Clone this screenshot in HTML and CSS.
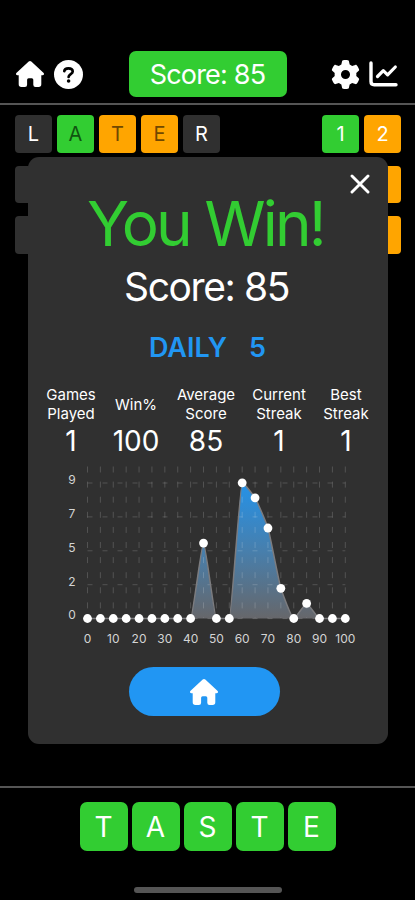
FILE: index.html
```html
<!DOCTYPE html>
<html lang="en">
<head>
    <meta charset="UTF-8">
    <title>Daily 5</title>
    <link rel="stylesheet" href="styles.css">
</head>
<body>
    <svg class="defs" width="0" height="0">
        <symbol id="house" viewBox="0 0 28 26">
            <path d="M12.7.6Q14-.5 15.3.6L27.4 11.7Q28.3 12.7 27.9 13.5Q27.5 14.3 26.5 14.3H25.3V23.3Q25.3 26 22.6 26H19.5Q17.3 26 17.3 23.8V18.8Q17.3 17.3 15.8 17.3H12.6Q11.1 17.3 11.1 18.8V23.8Q11.1 26 8.9 26H5.4Q2.7 26 2.7 23.3V14.3H1.5Q.5 14.3.1 13.5Q-.3 12.7.6 11.7Z"/>
        </symbol>
    </svg>
    <div class="app">
        <header class="header">
            <div class="icons">
                <svg class="icon-home" width="28" height="26"><use href="#house"/></svg>
                <svg class="icon-help" width="29" height="29" viewBox="0 0 29 29">
                    <circle cx="14.5" cy="14.5" r="14.5" fill="#fff"/>
                    <path d="M10.3 11.2C10.5 9.2 11.8 8.3 14.4 8.3C17 8.3 18.7 9.5 18.7 11.6C18.7 14.2 14.6 14.2 14.6 17" fill="none" stroke="#000" stroke-width="2.7" stroke-linecap="round"/>
                    <circle cx="14.6" cy="21" r="1.8" fill="#000"/>
                </svg>
            </div>
            <div class="score-pill">Score: 85</div>
            <div class="icons icons-right">
                <svg width="29" height="29" viewBox="0 0 512 512">
                    <path d="M495.9 166.6c3.2 8.7 .5 18.4-6.4 24.6l-43.3 39.4c1.1 8.3 1.7 16.8 1.7 25.4s-.6 17.1-1.7 25.4l43.3 39.4c6.9 6.2 9.6 15.9 6.4 24.6c-4.4 11.9-9.7 23.3-15.8 34.3l-4.7 8.1c-6.6 11-14 21.4-22.1 31.2c-5.9 7.2-15.7 9.6-24.5 6.8l-55.7-17.7c-13.4 10.3-28.2 18.9-44 25.4l-12.5 57.1c-2 9.1-9 16.3-18.2 17.8c-13.8 2.3-28 3.5-42.5 3.5s-28.7-1.2-42.5-3.5c-9.2-1.5-16.2-8.7-18.2-17.8l-12.5-57.1c-15.8-6.5-30.6-15.1-44-25.4L83.1 425.9c-8.8 2.8-18.6 .3-24.5-6.8c-8.1-9.8-15.5-20.2-22.1-31.2l-4.7-8.1c-6.1-11-11.4-22.4-15.8-34.3c-3.2-8.7-.5-18.4 6.4-24.6l43.3-39.4C64.6 273.1 64 264.6 64 256s.6-17.1 1.7-25.4L22.4 191.2c-6.9-6.2-9.6-15.9-6.4-24.6c4.4-11.9 9.7-23.3 15.8-34.3l4.7-8.1c6.6-11 14-21.4 22.1-31.2c5.9-7.2 15.7-9.6 24.5-6.8l55.7 17.7c13.4-10.3 28.2-18.9 44-25.4l12.5-57.1c2-9.1 9-16.3 18.2-17.8C227.3 1.2 241.5 0 256 0s28.7 1.2 42.5 3.5c9.2 1.5 16.2 8.7 18.2 17.8l12.5 57.1c15.8 6.5 30.6 15.1 44 25.4l55.7-17.7c8.8-2.8 18.6-.3 24.5 6.8c8.1 9.8 15.5 20.2 22.1 31.2l4.7 8.1c6.1 11 11.4 22.4 15.8 34.3zM256 336a80 80 0 1 0 0-160 80 80 0 1 0 0 160z" fill="#fff"/>
                </svg>
                <svg width="29" height="26" viewBox="0 0 29 26" fill="none" stroke="#fff" stroke-linecap="round" stroke-linejoin="round">
                    <path d="M2 2V20.5Q2 23.7 5.2 23.7H27" stroke-width="3.4"/>
                    <path d="M8.5 15.5L14.3 9.7L18.6 13.8L26.3 6" stroke-width="3.2"/>
                </svg>
            </div>
        </header>

        <main class="board">
            <div class="row">
                <div class="tile gray">L</div>
                <div class="tile green">A</div>
                <div class="tile orange">T</div>
                <div class="tile orange">E</div>
                <div class="tile gray">R</div>
                <div class="tile green count first">1</div>
                <div class="tile orange count">2</div>
            </div>
            <div class="row">
                <div class="tile gray"></div>
                <div class="tile orange first"></div>
            </div>
            <div class="row">
                <div class="tile gray"></div>
                <div class="tile orange first"></div>
            </div>
        </main>

        <footer class="footer">
            <div class="answer">
                <div class="key">T</div>
                <div class="key">A</div>
                <div class="key">S</div>
                <div class="key">T</div>
                <div class="key">E</div>
            </div>
            <div class="home-bar"></div>
        </footer>

        <!-- Result dialog -->
        <section class="modal">
            <svg class="close" width="20" height="20" viewBox="0 0 20 20">
                <path d="M2 2L18 18M18 2L2 18" stroke="#fff" stroke-width="2.9" stroke-linecap="round"/>
            </svg>
            <h1>You Win!</h1>
            <h2>Score: 85</h2>
            <h3><span>DAILY</span><span>5</span></h3>
            <div class="stats">
                <div class="stat"><div class="label">Games<br>Played</div><div class="value">1</div></div>
                <div class="stat"><div class="label">Win%</div><div class="value">100</div></div>
                <div class="stat"><div class="label">Average<br>Score</div><div class="value">85</div></div>
                <div class="stat"><div class="label">Current<br>Streak</div><div class="value">1</div></div>
                <div class="stat"><div class="label">Best<br>Streak</div><div class="value">1</div></div>
            </div>
            <svg class="chart" id="chart" width="360" height="190" viewBox="28 460 360 190">
                <defs>
                    <linearGradient id="area" gradientUnits="userSpaceOnUse" x1="0" y1="483" x2="0" y2="618">
                        <stop offset="0" stop-color="#2592e8"/>
                        <stop offset="0.5" stop-color="#477fad"/>
                        <stop offset="1" stop-color="#66676b"/>
                    </linearGradient>
                </defs>
            </svg>
            <button class="home-button"><svg width="28" height="26"><use href="#house"/></svg></button>
        </section>
    </div>
    <script>
        var scores = [0, 0, 0, 0, 0, 0, 0, 0, 0, 5, 0, 0, 9, 8, 6, 2, 0, 1, 0, 0, 0];
        var ticks = [9, 7, 5, 2, 0];
        var chart = document.getElementById("chart");

        function px(i) { return 87.5 + i * 12.89; }
        function py(v) { return 618.5 - v * 15.08; }

        function add(name, attrs, text) {
            var el = document.createElementNS("http://www.w3.org/2000/svg", name);
            for (var key in attrs) el.setAttribute(key, attrs[key]);
            if (text !== undefined) el.textContent = text;
            chart.appendChild(el);
        }

        // Flat at peaks and valleys, so the curve never overshoots a point
        function slope(i) {
            var a = scores[i] - scores[i - 1], b = scores[i + 1] - scores[i];
            return a * b > 0 ? 2 * a * b / (a + b) : 0;
        }

        var d = "M" + px(0) + " " + py(0);
        for (var i = 1; i < scores.length; i++) {
            var m0 = slope(i - 1), m1 = slope(i);
            var t = 0.15;
            d += " C" + (px(i - 1) + 12.89 * t) + " " + py(scores[i - 1] + m0 * t) + " " +
                (px(i) - 12.89 * t) + " " + py(scores[i] - m1 * t) + " " + px(i) + " " + py(scores[i]);
        }

        add("path", { d: d + "Z", class: "area" });
        for (i = 0; i < scores.length; i++) {
            add("path", { d: "M" + px(i) + " 466.5V618", class: "grid-v" });
        }
        for (i = 0; i < ticks.length; i++) {
            var y = 483 + i * 33.9;
            add("path", { d: "M" + px(0) + " " + y + "H" + px(20), class: "grid-h" });
            add("text", { x: 72, y: y + 0.8, class: "axis" }, ticks[i]);
        }
        add("path", { d: d, class: "line" });
        for (i = 0; i < scores.length; i++) {
            add("circle", { cx: px(i), cy: py(scores[i]), r: 4.4, fill: "#fff" });
            if (i % 2 === 0) add("text", { x: px(i), y: 643, class: "axis" }, i * 5);
        }
    </script>
</body>
</html>
```
FILE: styles.css
```css
* {
    box-sizing: border-box;
}

body {
    margin: 0;
    background: #000;
    color: #fff;
    font-family: Inter, "Liberation Sans", sans-serif;
}

.defs {
    display: block;
}

#house {
    fill: #fff;
}

.app {
    position: relative;
    display: flex;
    flex-direction: column;
    width: 415px;
    height: 900px;
    overflow: hidden;
}

/* Top bar */
.header {
    display: grid;
    grid-template-columns: 113px 158px 1fr;
    align-items: center;
    height: 105px;
    padding: 51px 17px 6px 16px;
    border-bottom: 2px solid #555;
}

.icons {
    display: flex;
    align-items: center;
    gap: 10px;
}

.icons-right {
    justify-content: flex-end;
    gap: 9px;
}

.score-pill {
    height: 46px;
    padding-right: 1px;
    border-radius: 7px;
    background: #32cd32;
    font-size: 27px;
    line-height: 48px;
    letter-spacing: -0.8px;
    text-align: center;
}

/* Guesses */
.board {
    display: flex;
    flex: 1;
    flex-direction: column;
    gap: 13px;
    padding: 10px 14px 0 15px;
}

.row {
    display: flex;
    gap: 5px;
}

.tile {
    width: 37px;
    height: 37.5px;
    border-radius: 4px;
    font-size: 20px;
    line-height: 38px;
    text-align: center;
}

.gray {
    background: #303030;
}

.green {
    background: #32cd32;
    color: #105510;
}

.orange {
    background: #ffa500;
    color: #704800;
}

.count {
    color: #fff;
}

.first {
    margin-left: auto;
}

/* Answer */
.footer {
    display: flex;
    flex-direction: column;
    align-items: center;
    height: 114px;
    padding-top: 14px;
    border-top: 2px solid #555;
}

.answer {
    display: flex;
    gap: 4px;
}

.key {
    width: 48px;
    height: 49px;
    border-radius: 7px;
    background: #32cd32;
    font-size: 28px;
    line-height: 50px;
    text-align: center;
}

.home-bar {
    width: 148px;
    height: 6px;
    margin-top: 36px;
    border-radius: 3px;
    background: #555;
}

/* Result dialog */
.modal {
    position: absolute;
    top: 157px;
    left: 28px;
    display: flex;
    flex-direction: column;
    align-items: center;
    width: 360px;
    height: 587px;
    border-radius: 11px;
    background: #303030;
}

.close {
    position: absolute;
    top: 17px;
    right: 18px;
}

h1,
h2,
h3 {
    margin: 0;
    font-weight: 400;
    white-space: nowrap;
}

h1 {
    height: 70px;
    margin-top: 32px;
    padding-right: 5px;
    color: #32cd32;
    font-size: 62px;
    line-height: 70px;
    letter-spacing: -2.8px;
}

h2 {
    height: 50px;
    margin-top: 3px;
    padding-right: 3px;
    font-size: 39px;
    line-height: 50px;
    letter-spacing: -1.4px;
}

h3 {
    display: flex;
    gap: 22px;
    height: 36px;
    margin-top: 18px;
    padding-right: 1px;
    color: #2196f3;
    font-size: 27px;
    font-weight: 600;
    line-height: 36px;
}

.stats {
    display: grid;
    grid-template-columns: 64px 66px 74px 72px 62px;
    height: 75px;
    margin-top: 19px;
}

.stat {
    display: flex;
    flex-direction: column;
    align-items: center;
    text-align: center;
}

.label {
    display: flex;
    align-items: center;
    height: 38px;
    font-size: 15px;
    line-height: 19px;
}

.value {
    height: 34px;
    font-size: 28px;
    line-height: 36px;
}

.chart {
    margin-top: 0;
}

.grid-v,
.grid-h {
    fill: none;
    stroke: rgba(255, 255, 255, 0.17);
    stroke-width: 1;
}

.grid-v {
    stroke-dasharray: 6 9.1;
}

.grid-h {
    stroke-dasharray: 5 10;
}

.area {
    fill: url(#area);
}

.line {
    fill: none;
    stroke: #7c7c7f;
    stroke-width: 1.5;
}

.axis {
    fill: #d4d4d4;
    font-size: 12px;
    text-anchor: middle;
}

.home-button {
    display: flex;
    align-items: center;
    justify-content: center;
    width: 151px;
    height: 49px;
    margin-top: 17px;
    margin-right: 8px;
    padding: 0;
    border: 0;
    border-radius: 25px;
    background: #2196f3;
}
```
